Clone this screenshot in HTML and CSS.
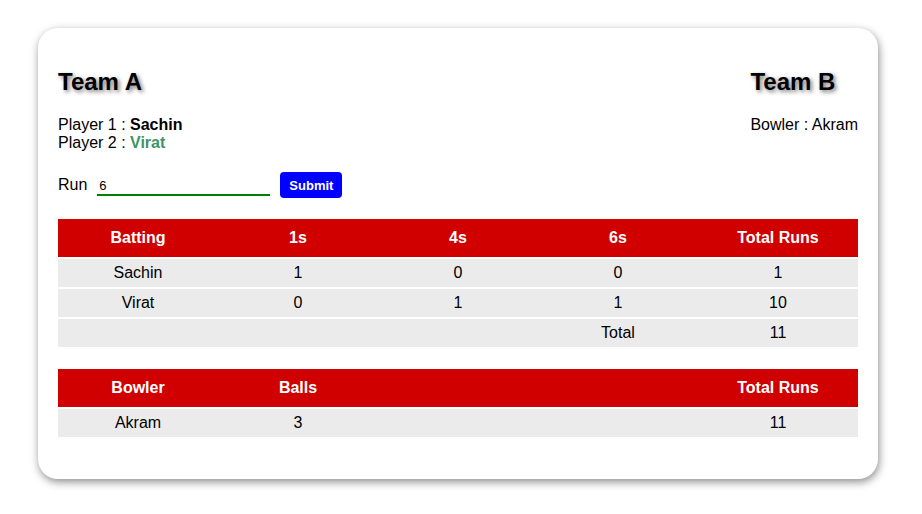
FILE: index.html
```html
<!DOCTYPE html>
<html>
<head>
<meta charset="utf-8">
<link rel="stylesheet" href="styles.css">
</head>
<body>
<div class="card">
  <div class="teams">
    <div class="team">
      <h2 class="team-title">Team A</h2>
      <div class="line">Player 1 : <b>Sachin</b></div>
      <div class="line">Player 2 : <b class="active">Virat</b></div>
    </div>
    <div class="team">
      <h2 class="team-title">Team B</h2>
      <div class="line">Bowler : Akram</div>
    </div>
  </div>
  <form class="run-form">
    <label class="run-label">Run</label>
    <input class="run-input" type="text" value="6">
    <button class="submit" type="button">Submit</button>
  </form>
  <table class="score">
    <thead>
      <tr><th>Batting</th><th>1s</th><th>4s</th><th>6s</th><th>Total Runs</th></tr>
    </thead>
    <tbody>
      <tr><td>Sachin</td><td>1</td><td>0</td><td>0</td><td>1</td></tr>
      <tr><td>Virat</td><td>0</td><td>1</td><td>1</td><td>10</td></tr>
      <tr><td></td><td></td><td></td><td>Total</td><td>11</td></tr>
    </tbody>
  </table>
  <table class="score">
    <thead>
      <tr><th>Bowler</th><th>Balls</th><th></th><th></th><th>Total Runs</th></tr>
    </thead>
    <tbody>
      <tr><td>Akram</td><td>3</td><td></td><td></td><td>11</td></tr>
    </tbody>
  </table>
</div>
</body>
</html>
```
FILE: styles.css
```css
body {
  margin: 8px;
  font-family: "Liberation Sans", Arial, sans-serif;
  font-size: 16px;
  color: #000;
  background: #fff;
}
.card {
  width: 800px;
  margin: 20px 30px;
  padding: 20px;
  border-radius: 20px;
  background: #fff;
  box-shadow: 1px 3px 8px rgba(0, 0, 0, 0.45);
}
.teams {
  display: flex;
  justify-content: space-between;
}
.team-title {
  font-size: 24px;
  font-weight: bold;
  margin: 20px 0 20px;
  text-shadow: 2px 2px 4px rgba(0, 0, 0, 0.55);
}
.line {
  line-height: 18px;
}
.active {
  color: #3f9462;
}
.run-form {
  display: flex;
  align-items: center;
  margin: 20px 0 0;
  height: 26px;
}
.run-label {
  margin-right: 10px;
}
.run-input {
  width: 173px;
  height: 22px;
  box-sizing: border-box;
  border: none;
  border-bottom: 2px solid #008000;
  padding: 2px 2px 0;
  font-family: "Liberation Sans", Arial, sans-serif;
  font-size: 13px;
  margin-top: 0;
  outline: none;
}
.submit {
  margin-left: 10px;
  height: 26px;
  padding: 0 9px;
  border: none;
  border-radius: 4px;
  background: #0000ff;
  color: #fff;
  font-family: "Liberation Sans", Arial, sans-serif;
  font-size: 13px;
  font-weight: bold;
}
.score {
  width: 800px;
  border-collapse: separate;
  border-spacing: 0 2px;
  margin-top: 19px;
  table-layout: fixed;
}
.score + .score {
  margin-top: 18px;
  margin-bottom: 20px;
}
.score th {
  background: #d00000;
  color: #fff;
  font-weight: bold;
  height: 38px;
  padding: 0;
  text-align: center;
}
.score td {
  background: #ebebeb;
  height: 28px;
  padding: 0;
  text-align: center;
}
```
